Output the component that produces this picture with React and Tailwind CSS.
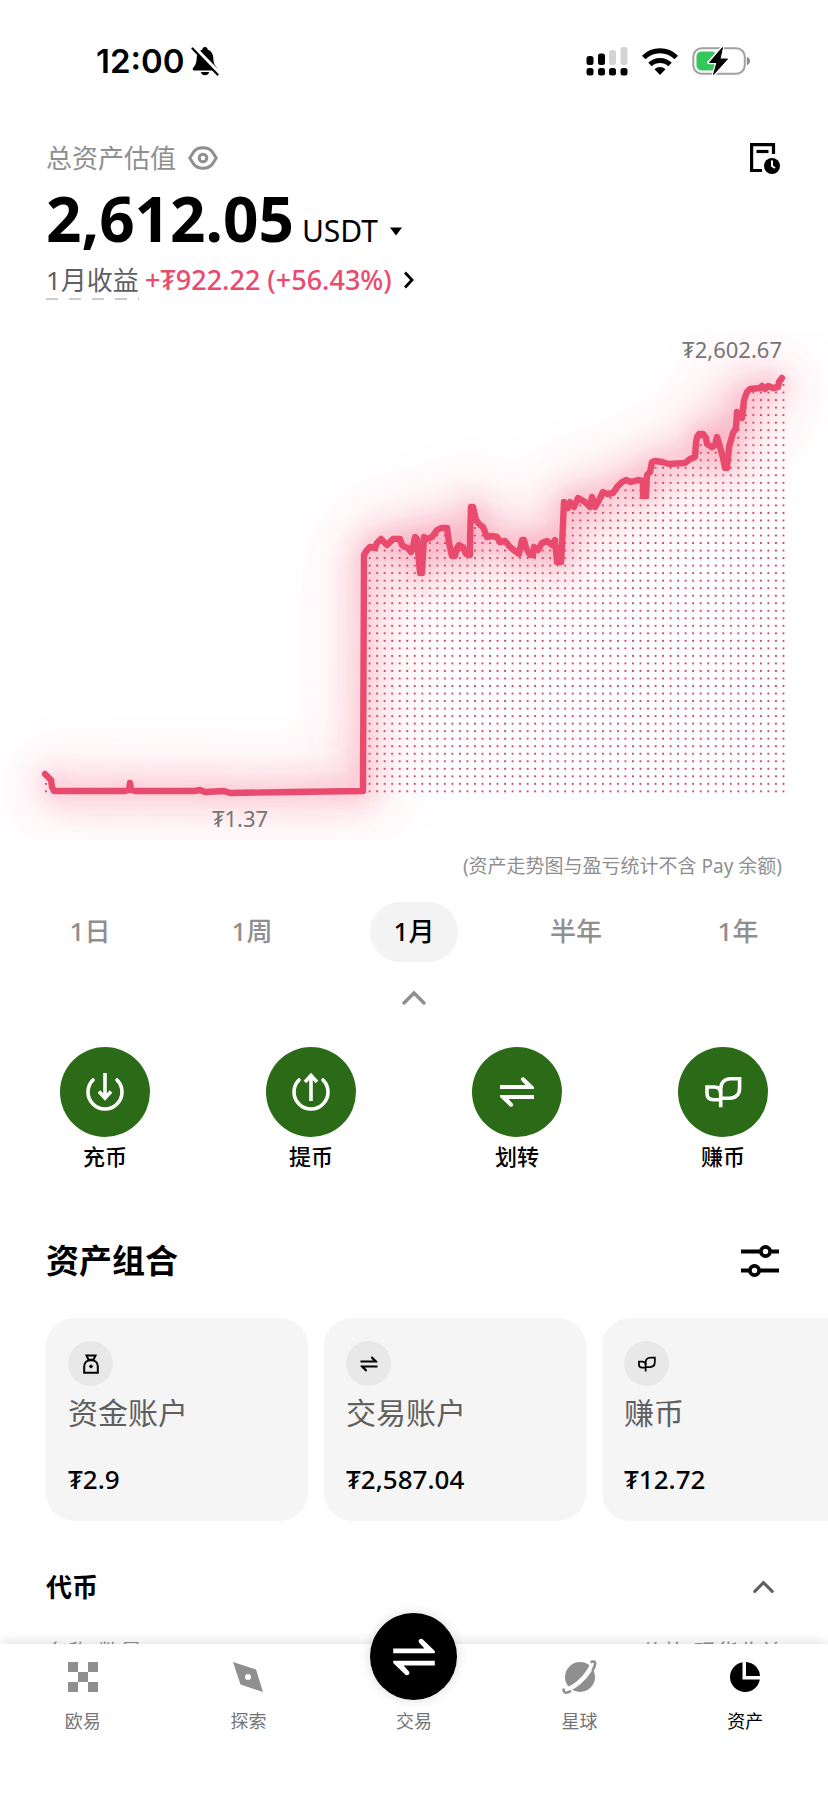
import { useState } from 'react';

const ranges = ['1日', '1周', '1月', '半年', '1年'];

const trend = [
  [45, 774], [48, 777], [51, 780], [52, 787], [54, 791], [125, 791], [129, 790], [130, 783], [131, 790], [135, 791],
  [194, 791], [200, 790], [205, 792], [224, 791], [230, 793], [290, 792], [363, 791],
  [364, 555], [367, 550], [370, 547], [375, 548], [377, 543], [381, 539], [383, 541], [387, 545], [390, 542],
  [393, 539], [400, 539], [402, 545], [405, 547], [408, 548], [411, 552], [413, 547], [415, 537], [417, 539],
  [420, 573], [422, 573], [423, 555], [424, 537], [427, 539], [432, 537], [435, 533], [437, 530], [441, 528],
  [447, 528], [449, 543], [452, 556], [455, 556], [457, 548], [459, 545], [463, 547], [466, 554], [470, 555],
  [470, 540], [471, 507], [473, 507], [476, 520], [479, 524], [483, 527], [487, 537], [492, 536], [497, 537],
  [500, 542], [505, 541], [510, 547], [515, 551], [519, 554], [522, 540], [524, 540], [526, 548], [530, 555],
  [533, 555], [534, 547], [538, 550], [542, 543], [547, 541], [552, 545], [555, 540], [557, 562], [561, 562],
  [562, 547], [563, 523], [564, 502], [565, 508], [568, 508], [570, 502], [574, 507], [578, 498], [585, 502],
  [590, 507], [592, 497], [595, 507], [598, 502], [603, 492], [607, 494], [613, 493], [617, 487], [622, 482],
  [626, 480], [631, 482], [638, 480], [643, 481], [643, 496], [646, 496], [647, 475], [650, 472], [652, 462],
  [655, 461], [662, 462], [669, 464], [685, 463], [690, 459], [695, 457], [696, 443], [697, 437], [699, 434],
  [703, 434], [706, 438], [707, 444], [712, 447], [715, 445], [717, 437], [720, 447], [723, 458], [725, 468],
  [727, 468], [729, 447], [733, 433], [736, 428], [737, 412], [742, 418], [744, 400], [747, 392], [750, 389],
  [760, 388], [762, 386], [765, 389], [768, 386], [773, 388], [778, 387], [779, 382], [782, 378],
];

const linePath = 'M' + trend.map((p) => p.join(' ')).join('L');
const areaPath = `${linePath}L787 378V794H44Z`;

function TransferIcon({ className }) {
  return (
    <svg viewBox="0 0 36 36" className={className} fill="currentColor">
      <path d="M1 11H26.500L21.800 5.800Q21.600 2.800 24.800 3.200L35 13V15H1Z" />
      <path d="M35 25H9.500L14.200 30.200Q14.400 33.200 11.200 32.800L1 23V21H35Z" />
    </svg>
  );
}

function LeafIcon({ className }) {
  return (
    <svg viewBox="0 0 37 36" className={className} fill="none" stroke="currentColor" strokeWidth="3.600">
      <path d="M15.700 33.300V15C15.700 8.500 19.500 4.700 26 4.700H34.600V14C34.600 20.500 31 24.200 24.500 24.200H15.700" />
      <path d="M15.700 25.700H8.500C4.200 25.700 2 23.500 2 19.500V13H9C13.300 13 15.700 15.200 15.700 19.500" />
    </svg>
  );
}

function DepositIcon({ className }) {
  return (
    <svg viewBox="0 0 40 40" className={className} fill="none" stroke="currentColor" strokeWidth="3.600">
      <path d="M8 8A17 17 0 1 0 32 8" strokeLinecap="round" />
      <path d="M20 1V26M14 19.500L20 26L26 19.500" />
    </svg>
  );
}

function WithdrawIcon({ className }) {
  return (
    <svg viewBox="0 0 40 40" className={className} fill="none" stroke="currentColor" strokeWidth="3.600">
      <path d="M8 8A17 17 0 1 0 32 8" strokeLinecap="round" />
      <path d="M20 29V4M14 10L20 3.500L26 10" />
    </svg>
  );
}

function BagIcon({ className }) {
  return (
    <svg viewBox="0 0 20 20" className={className} fill="none" stroke="currentColor" strokeWidth="2">
      <path d="M5.500 1.600H14.500L12.500 5.800H7.500Z" />
      <path d="M3.200 18.800V12.500C3.200 8.500 6 6.200 10 6.200S16.800 8.500 16.800 12.500V18.800Z" />
      <path d="M10 10.200L12.200 12.400L10 14.600L7.800 12.400Z" fill="currentColor" stroke="none" />
    </svg>
  );
}

function ChevronUp({ className }) {
  return (
    <svg viewBox="0 0 26 16" className={className} fill="none" stroke="currentColor" strokeWidth="3.400" strokeLinecap="round">
      <path d="M3 13L13 3L23 13" />
    </svg>
  );
}

function StatusBar() {
  return (
    <div className="flex h-[122px] items-center justify-between pl-24 pr-[76px]">
      <div className="flex items-center gap-1.5">
        <span className="font-[Inter] text-[33px] font-semibold leading-10">12:00</span>
        <svg viewBox="0 0 28 30" className="h-[30px] w-7">
          <path d="M14 1C12.300 1 11.300 2.200 11.200 3.700C7.500 5 5.800 8.200 5.700 12C5.500 17 4.500 19 2.500 21.200C1 23 1.600 24.500 3.500 24.500H24.500C26.400 24.500 27 23 25.500 21.200C23.500 19 22.500 17 22.300 12C22.200 8.200 20.500 5 16.800 3.700C16.700 2.200 15.700 1 14 1Z" />
          <path d="M9.800 26H18.200C17.500 28.200 16 29.300 14 29.300S10.500 28.200 9.800 26Z" />
          <path d="M3 1.500L28 27.500" stroke="#fff" strokeWidth="4.500" />
          <path d="M1.500 2.500L26.500 28.500" stroke="#000" strokeWidth="2.200" strokeLinecap="round" />
        </svg>
      </div>
      <div className="flex items-center gap-3.5">
        <svg viewBox="0 0 42 30" className="h-[30px] w-[42px]">
          <rect x="0.500" y="10" width="7" height="9" rx="2.500" />
          <rect x="12" y="7.500" width="7" height="11.500" rx="2.500" />
          <rect x="23" y="4" width="7" height="15" rx="2.500" fill="#d4d4d4" />
          <rect x="34.500" y="1" width="7" height="18" rx="2.500" fill="#d4d4d4" />
          {[0.5, 12, 23, 34.5].map((x) => (
            <rect key={x} x={x} y="22" width="7" height="7.500" rx="2.500" />
          ))}
        </svg>
        <svg viewBox="0 0 36 27" className="h-[27px] w-9" fill="none" stroke="#000" strokeWidth="5">
          <path d="M1.700 9.500A23 23 0 0 1 34.300 9.500" />
          <path d="M8 16.500A14.500 14.500 0 0 1 28 16.500" />
          <path d="M12.500 21.300A8 8 0 0 1 23.500 21.300L18 27Z" fill="#000" stroke="none" />
        </svg>
        <svg viewBox="0 0 60 28" className="h-7 w-[60px]">
          <rect x="1.300" y="1.300" width="51.500" height="25.400" rx="8.500" fill="none" stroke="#a0a0a0" strokeWidth="2" />
          <path d="M54.800 9.800C56.800 10.500 58 12 58 14S56.800 17.500 54.800 18.200Z" fill="#8c8c8c" />
          <rect x="4.500" y="4.500" width="20" height="19" rx="5" fill="#34c759" />
          <path d="M30.500 0.500L17 15.500H25L21.500 27.500L36 12H28Z" stroke="#fff" strokeWidth="3.500" strokeLinejoin="round" />
          <path d="M30.500 0.500L17.500 15.500H25L21.500 27.500L35.500 12H28Z" stroke="#000" strokeLinejoin="round" />
        </svg>
      </div>
    </div>
  );
}

function TrendChart() {
  return (
    <svg viewBox="0 330 828 510" className="mt-[30px] block w-full" role="img" aria-label="资产走势图">
      <defs>
        <filter id="soft" filterUnits="userSpaceOnUse" x="-60" y="240" width="960" height="700">
          <feGaussianBlur stdDeviation="13" />
        </filter>
        <filter id="wide" filterUnits="userSpaceOnUse" x="-60" y="240" width="960" height="700">
          <feGaussianBlur stdDeviation="28" />
        </filter>
        <pattern id="dots" x="42.250" y="787.600" width="7.525" height="7.525" patternUnits="userSpaceOnUse">
          <rect x="2.800" y="2.800" width="1.900" height="1.900" fill="#dc4369" />
        </pattern>
      </defs>
      <path d={linePath} fill="none" stroke="#f0476f" strokeOpacity="0.220" strokeWidth="36" filter="url(#wide)" />
      <path d={linePath} fill="none" stroke="#f0476f" strokeOpacity="0.360" strokeWidth="13" filter="url(#soft)" />
      <path d={areaPath} fill="url(#dots)" />
      <path d={linePath} fill="none" stroke="#e94b6e" strokeWidth="6.400" strokeLinejoin="round" strokeLinecap="round" />
      <text x="782" y="358" textAnchor="end" fontSize="22" fill="#757575">₮2,602.67</text>
      <text x="240" y="827" textAnchor="middle" fontSize="22" fill="#757575">₮1.37</text>
    </svg>
  );
}

const actions = [
  { label: '充币', icon: <DepositIcon className="size-10" /> },
  { label: '提币', icon: <WithdrawIcon className="size-10" /> },
  { label: '划转', icon: <TransferIcon className="size-9" /> },
  { label: '赚币', icon: <LeafIcon className="h-9 w-[37px]" /> },
];

const accounts = [
  { name: '资金账户', value: '₮2.9', icon: <BagIcon className="size-5" /> },
  { name: '交易账户', value: '₮2,587.04', icon: <TransferIcon className="size-[18px]" /> },
  { name: '赚币', value: '₮12.72', icon: <LeafIcon className="size-[18px]" /> },
];

function NavItem({ label, active, children }) {
  return (
    <a href="#" className={`flex flex-1 flex-col items-center pt-[18px] ${active ? 'text-black' : 'text-[#8f8f8f]'}`}>
      <svg viewBox="0 0 30 30" className="size-[30px] overflow-visible" fill="currentColor">{children}</svg>
      <span className={`mt-[15px] text-lg leading-7 ${active ? 'text-black' : 'text-[#757575]'}`}>{label}</span>
    </a>
  );
}

function BottomNav() {
  return (
    <nav className="relative z-10 flex h-[156px] shrink-0 bg-white shadow-[0_-2px_10px_rgba(0,0,0,0.12)]">
      <NavItem label="欧易">
        <path d="M0 0H10V10H0ZM20 0H30V10H20ZM10 10H20V20H10ZM0 20H10V30H0ZM20 20H30V30H20Z" />
      </NavItem>
      <NavItem label="探索">
        <path fillRule="evenodd" d="M0 0L23 7.500L30 30L7.500 22.500ZM15 12A3 3 0 1 0 15 18A3 3 0 1 0 15 12Z" />
      </NavItem>
      <a href="#" className="flex flex-1 flex-col items-center text-[#757575]">
        <span className="-mt-[31px] flex size-[87px] items-center justify-center rounded-full bg-black text-white shadow-[0_0_12px_rgba(0,0,0,0.15)]">
          <TransferIcon className="size-11" />
        </span>
        <span className="mt-[7px] text-lg leading-7">交易</span>
      </a>
      <NavItem label="星球">
        <circle cx="15" cy="15" r="15" />
        <path d="M-1 28C6 27.500 14 21 19.500 15C24 9.500 28 4 27 0" fill="none" stroke="#fff" strokeWidth="4.600" />
        <path d="M-1.200 26.500C-1.500 29 -1 30.500 0.500 30.700C2 30.800 4 30 6 28.800" fill="none" stroke="currentColor" strokeWidth="2.600" />
        <path d="M25.500 0.200C28 -0.800 30.200 -0.800 30.200 1.200C30.200 3.500 29.300 5.500 27.500 8.500" fill="none" stroke="currentColor" strokeWidth="2.600" />
      </NavItem>
      <NavItem label="资产" active>
        <path d="M12.500 0.200A15 15 0 1 0 29.800 17.500H12.500Z" />
        <path d="M16 0A15 15 0 0 1 30 14H16Z" />
      </NavItem>
    </nav>
  );
}

export default function App() {
  const [range, setRange] = useState('1月');

  return (
    <div className="flex h-screen flex-col overflow-hidden bg-white font-['Noto_Sans','Noto_Sans_CJK_SC',sans-serif] text-black">
      <main className="flex-1 overflow-x-hidden overflow-y-auto [scrollbar-width:none]">
        <StatusBar />

        <header className="px-[46px] pt-4">
          <div className="flex h-10 items-center justify-between">
            <button type="button" className="flex items-center gap-3 text-[26px] leading-10 text-[#8f8f8f]">
              总资产估值
              <svg viewBox="0 0 30 24" className="h-6 w-[30px]" fill="none" stroke="currentColor" strokeWidth="3">
                <path d="M1.800 12L6 5.500C8 3 11 1.800 15 1.800S22 3 24 5.500L28.200 12L24 18.500C22 21 19 22.200 15 22.200S8 21 6 18.500Z" />
                <circle cx="15" cy="12" r="3.800" />
              </svg>
            </button>
            <button type="button" aria-label="账单" className="pr-0.5">
              <svg viewBox="0 0 32 32" className="size-8" fill="none" stroke="#000" strokeWidth="3.200">
                <path d="M25.500 12V2.600H3.600V28.500H14" />
                <path d="M8.500 9.500H20.500" />
                <circle cx="24" cy="24" r="8" fill="#000" stroke="none" />
                <path d="M24 18.500V24L27 26" stroke="#fff" strokeWidth="2" />
              </svg>
            </button>
          </div>
          <div className="mt-1 flex items-baseline">
            <h1 className="text-[62px] font-bold leading-[72px]">2,612.05</h1>
            <button type="button" className="ml-2 flex items-center gap-3 text-[30px] leading-10">
              USDT
              <svg viewBox="0 0 12 9" className="h-[9px] w-3">
                <path d="M0 0.500H12L6 8.500Z" />
              </svg>
            </button>
          </div>
          <div className="mt-2 flex items-start text-[26px] leading-9">
            <button type="button" className="text-[#5f5f5f]">
              1月收益
              <span className="block h-0.5 bg-[repeating-linear-gradient(90deg,#ccc_0_12px,transparent_12px_23px)]" />
            </button>
            <a href="#" className="ml-1.5 flex items-center gap-3 text-[27px] font-medium text-[#eb4a6d]">
              +₮922.22 (+56.43%)
              <svg viewBox="0 0 10 18" className="h-[18px] w-2.5" fill="none" stroke="#000" strokeWidth="2.800">
                <path d="M1 1.500L8 9L1 16.500" />
              </svg>
            </a>
          </div>
        </header>

        <TrendChart />

        <p className="mt-3 px-[46px] text-right text-[19px] leading-7 text-[#8f8f8f]">(资产走势图与盈亏统计不含 Pay 余额)</p>

        <div className="mt-[22px] flex justify-between px-[46px]">
          {ranges.map((r) => (
            <button
              key={r}
              type="button"
              onClick={() => setRange(r)}
              className={`h-15 w-22 rounded-full pb-0.5 text-[26px] font-medium ${r === range ? 'bg-[#f3f3f3] text-black' : 'text-[#8f8f8f]'}`}
            >
              {r}
            </button>
          ))}
        </div>
        <div className="mt-6 flex h-6 items-center justify-center">
          <button type="button" aria-label="收起" className="text-[#8f8f8f]">
            <ChevronUp className="h-4 w-[26px]" />
          </button>
        </div>

        <div className="mt-[37px] flex justify-between px-15">
          {actions.map((action) => (
            <button key={action.label} type="button" className="flex flex-col items-center">
              <span className="flex size-[90px] items-center justify-center rounded-full bg-[#2b6b18] text-white">{action.icon}</span>
              <span className="mt-[5px] text-[22px] font-medium leading-7">{action.label}</span>
            </button>
          ))}
        </div>

        <section className="mt-[71px]">
          <div className="flex h-10 items-center justify-between px-[46px]">
            <h2 className="text-[33px] font-bold leading-10">资产组合</h2>
            <button type="button" aria-label="筛选" className="pr-0.5">
              <svg viewBox="0 0 40 34" className="h-[34px] w-10" fill="none" stroke="#000" strokeWidth="3.800">
                <path d="M1 7.500H20M30 7.500H39M1 26.500H9M19 26.500H39" />
                <circle cx="25.500" cy="7.500" r="4.600" />
                <circle cx="14.500" cy="26.500" r="4.600" />
              </svg>
            </button>
          </div>
          <div className="mt-[37px] flex gap-4 overflow-hidden pl-[46px]">
            {accounts.map((account) => (
              <button key={account.name} type="button" className="w-[262px] shrink-0 rounded-[28px] bg-[#f5f5f5] px-[22px] pt-[23px] pb-[26px] text-left">
                <span className="flex size-[45px] items-center justify-center rounded-full bg-[#e8e8e8]">{account.icon}</span>
                <span className="mt-[7px] block text-[30px] leading-10 text-[#5f5f5f]">{account.name}</span>
                <span className="mt-[30px] block text-[26px] font-medium leading-8">{account.value}</span>
              </button>
            ))}
          </div>
        </section>

        <section className="mt-[46px] px-[46px]">
          <div className="flex h-10 items-center justify-between">
            <h2 className="text-[26px] font-bold leading-10">代币</h2>
            <button type="button" aria-label="收起代币" className="pr-[7px] text-[#5f5f5f]">
              <ChevronUp className="h-3.5 w-[23px]" />
            </button>
          </div>
          <div className="mt-[30px] flex justify-between text-[22px] leading-7 text-[#8f8f8f]">
            <span>名称/数量</span>
            <span>价格/现货收益</span>
          </div>
        </section>
      </main>
      <BottomNav />
    </div>
  );
}
